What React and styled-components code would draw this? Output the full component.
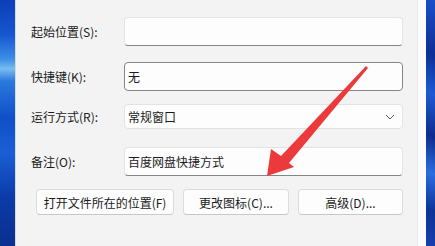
import React from 'react';
import styled, { createGlobalStyle } from 'styled-components';

const Global = createGlobalStyle`
  html, body { margin: 0; padding: 0; }
  body {
    width: 435px; height: 246px; overflow: hidden;
    font-family: "Noto Sans CJK SC", "Microsoft YaHei", sans-serif;
    -webkit-font-smoothing: antialiased;
  }
`;

const Screen = styled.div`
  position: relative;
  display: flex;
  width: 435px;
  height: 246px;
  overflow: hidden;
`;

const Wallpaper = styled.div`
  flex: none;
  width: ${p => p.$w}px;
  background: ${p => p.$bg};
`;

const Dialog = styled.div`
  flex: 1;
  display: flex;
  background: #f3f3f3;
  border-left: 1px solid #d9d9d9;
`;

const Content = styled.div`
  flex: 1;
  display: flex;
  flex-direction: column;
  padding: 17px 14px 0 15px;
`;

const Edge = styled.div`
  flex: none;
  width: 8px;
  background: #fbfbfb;
  border-left: 1px solid #ebebeb;
`;

const Row = styled.div`
  display: grid;
  grid-template-columns: 93px 1fr;
  align-items: center;
  margin-top: ${p => p.$mt || 0}px;
`;

const Label = styled.label`
  font-size: 12px;
  color: #1b1b1b;
  white-space: nowrap;
`;

const Field = styled.div`
  position: relative;
  box-sizing: border-box;
  height: ${p => p.$h || 29}px;
  display: flex;
  align-items: center;
  padding-left: 3px;
  background: #fdfdfd;
  border: 1px solid ${p => (p.$focus ? '#858585' : '#e3e3e3')};
  border-bottom-color: ${p => (p.$plain ? '#e3e3e3' : '#858585')};
  border-radius: 4px;
  font-size: 12px;
  color: #1b1b1b;
`;

const Chevron = styled.svg`
  position: absolute;
  right: 7px;
  top: 50%;
  margin-top: -3px;
`;

const Buttons = styled.div`
  display: flex;
  gap: 9px;
  margin: 13px 0 0 5px;
`;

const Button = styled.button`
  box-sizing: border-box;
  width: ${p => p.$w}px;
  height: 26px;
  padding: 0;
  background: #fdfdfd;
  border: 1px solid #dcdcdc;
  border-bottom-color: #c8c8c8;
  border-radius: 4px;
  font-family: inherit;
  font-size: 12px;
  color: #1b1b1b;
  white-space: nowrap;
`;

const Annotation = styled.svg`
  position: absolute;
  left: 0;
  top: 0;
  pointer-events: none;
`;

const leftBg = `linear-gradient(180deg, #0b3fb8 0%, #1556d0 14%, #3c8fe6 24%, #79bdf1 28%, #2a78de 33%, #0f4fc8 48%, #1a5fd6 62%, #0c3ba8 80%, #0a2f8f 100%)`;
const rightBg = `linear-gradient(200deg, #1a4fc9 0%, #0d2f95 22%, #1d5ad4 38%, #0c2c8c 55%, #2a6ee0 70%, #0e3296 85%, #173fae 100%)`;

export default function App() {
  return (
    <>
      <Global />
      <Screen>
        <Wallpaper $w={15} $bg={leftBg} />
        <Dialog>
          <Content>
            <Row>
              <Label>起始位置(S):</Label>
              <Field />
            </Row>
            <Row $mt={16}>
              <Label>快捷键(K):</Label>
              <Field $focus>无</Field>
            </Row>
            <Row $mt={13}>
              <Label>运行方式(R):</Label>
              <Field $h={25} $plain>
                常规窗口
                <Chevron width="10" height="6" viewBox="0 0 10 6">
                  <path d="M1 1 L5 5 L9 1" fill="none" stroke="#5a5a5a" strokeWidth="1" />
                </Chevron>
              </Field>
            </Row>
            <Row $mt={18}>
              <Label>备注(O):</Label>
              <Field>百度网盘快捷方式</Field>
            </Row>
            <Buttons>
              <Button $w={138}>打开文件所在的位置(F)</Button>
              <Button $w={106}>更改图标(C)...</Button>
              <Button $w={105}>高级(D)...</Button>
            </Buttons>
          </Content>
          <Edge />
        </Dialog>
        <Wallpaper $w={9} $bg={rightBg} />
        <Annotation width="435" height="246" viewBox="0 0 435 246">
          <polygon
            points="267,176 271,149 281,156 366,66 368,68 289,163 294,167"
            fill="#ec3a3c"
          />
        </Annotation>
      </Screen>
    </>
  );
}
